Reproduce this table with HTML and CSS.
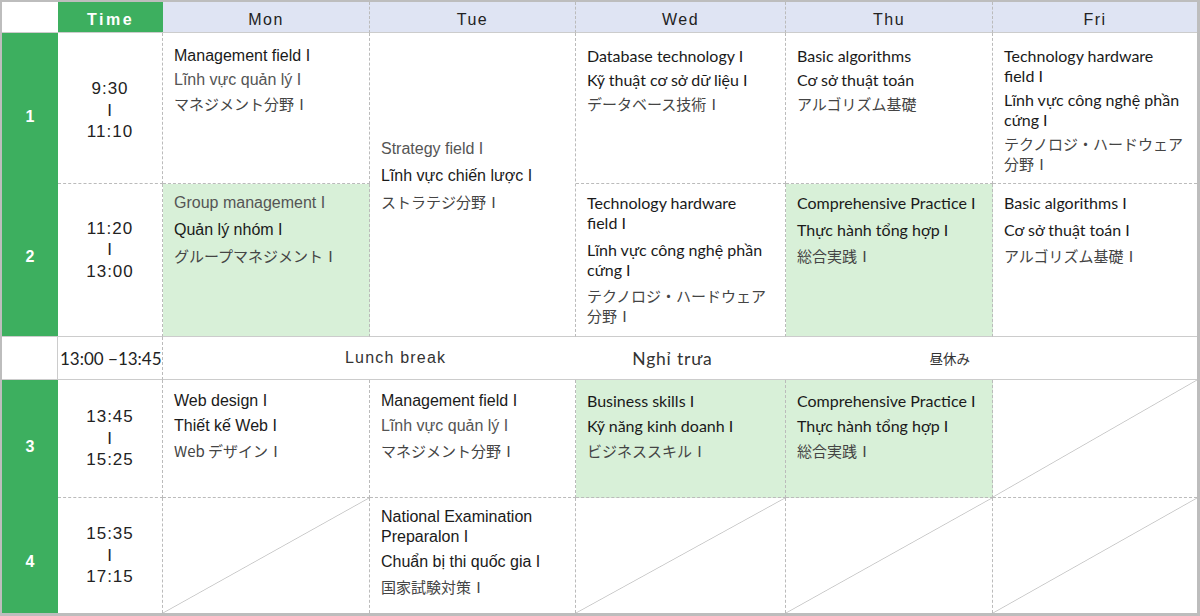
FILE: index.html
```html
<!DOCTYPE html>
<html lang="en">
<head>
<meta charset="utf-8">
<title>Timetable</title>
<link rel="stylesheet" href="styles.css">
</head>
<body>
<div class="timetable">
  <div class="cell corner"></div>
  <div class="cell head-time">Time</div>
  <div class="cell head-day">Mon</div>
  <div class="cell head-day">Tue</div>
  <div class="cell head-day">Wed</div>
  <div class="cell head-day">Thu</div>
  <div class="cell head-day last">Fri</div>

  <!-- Period 1 -->
  <div class="cell num n1">1</div>
  <div class="cell time t1"><span>9:30</span><span>I</span><span>11:10</span></div>
  <div class="cell subj r1 hv">
    <p class="en">Management field I</p>
    <p class="vi">Lĩnh vực quản lý I</p>
    <p class="ja">マネジメント分野Ⅰ</p>
  </div>
  <div class="cell subj span2 hv">
    <p class="vi">Strategy field I</p>
    <p class="en">Lĩnh vực chiến lược I</p>
    <p class="ja">ストラテジ分野Ⅰ</p>
  </div>
  <div class="cell subj r1 my">
    <p class="en">Database technology I</p>
    <p class="en">Kỹ thuật cơ sở dữ liệu I</p>
    <p class="ja">データベース技術Ⅰ</p>
  </div>
  <div class="cell subj r1 my">
    <p class="en">Basic algorithms</p>
    <p class="en">Cơ sở thuật toán</p>
    <p class="ja">アルゴリズム基礎</p>
  </div>
  <div class="cell subj r1 my last">
    <p class="en">Technology hardware field I</p>
    <p class="en">Lĩnh vực công nghệ phần cứng I</p>
    <p class="ja">テクノロジ・ハードウェア分野Ⅰ</p>
  </div>

  <!-- Period 2 -->
  <div class="cell num n2 row-end">2</div>
  <div class="cell time t2 row-end"><span>11:20</span><span>I</span><span>13:00</span></div>
  <div class="cell subj r2 hv green row-end">
    <p class="vi">Group management I</p>
    <p class="en">Quản lý nhóm I</p>
    <p class="ja">グループマネジメントⅠ</p>
  </div>
  <div class="cell subj r2 my narrow row-end">
    <p class="en">Technology hardware field I</p>
    <p class="en">Lĩnh vực công nghệ phần cứng I</p>
    <p class="ja">テクノロジ・ハードウェア分野Ⅰ</p>
  </div>
  <div class="cell subj r2 my green row-end">
    <p class="en">Comprehensive Practice I</p>
    <p class="en">Thực hành tổng hợp I</p>
    <p class="ja">総合実践Ⅰ</p>
  </div>
  <div class="cell subj r2 my last row-end">
    <p class="en">Basic algorithms I</p>
    <p class="en">Cơ sở thuật toán I</p>
    <p class="ja">アルゴリズム基礎Ⅰ</p>
  </div>

  <!-- Lunch -->
  <div class="cell lunch-num"></div>
  <div class="cell lunch-time">13:00 −13:45</div>
  <div class="cell lunch">
    <span class="lunch-en">Lunch break</span>
    <span class="lunch-vi">Nghỉ trưa</span>
    <span class="lunch-ja">昼休み</span>
  </div>

  <!-- Period 3 -->
  <div class="cell num n3">3</div>
  <div class="cell time"><span>13:45</span><span>I</span><span>15:25</span></div>
  <div class="cell subj r3 hv">
    <p class="en">Web design I</p>
    <p class="en">Thiết kế Web I</p>
    <p class="ja">Web デザインⅠ</p>
  </div>
  <div class="cell subj r3 hv">
    <p class="en">Management field I</p>
    <p class="vi">Lĩnh vực quản lý I</p>
    <p class="ja">マネジメント分野Ⅰ</p>
  </div>
  <div class="cell subj r3 my green">
    <p class="en">Business skills I</p>
    <p class="en">Kỹ năng kinh doanh I</p>
    <p class="ja">ビジネススキルⅠ</p>
  </div>
  <div class="cell subj r3 my green">
    <p class="en">Comprehensive Practice I</p>
    <p class="en">Thực hành tổng hợp I</p>
    <p class="ja">総合実践Ⅰ</p>
  </div>
  <div class="cell empty last"></div>

  <!-- Period 4 -->
  <div class="cell num n4 bottom">4</div>
  <div class="cell time bottom"><span>15:35</span><span>I</span><span>17:15</span></div>
  <div class="cell empty bottom"></div>
  <div class="cell subj r4 hv bottom">
    <p class="en">National Examination Preparalon I</p>
    <p class="en">Chuẩn bị thi quốc gia I</p>
    <p class="ja">国家試験対策Ⅰ</p>
  </div>
  <div class="cell empty bottom"></div>
  <div class="cell empty bottom"></div>
  <div class="cell empty bottom last"></div>
</div>
</body>
</html>
```

FILE: styles.css
```css
* { box-sizing: border-box; }

html, body {
  margin: 0;
  padding: 0;
  background: #ffffff;
}

.timetable {
  width: 1200px;
  height: 616px;
  border-style: solid;
  border-color: #bdbdbd;
  border-width: 2px 3px 3px 2px;
  display: grid;
  grid-template-columns: 56px 105px 207px 206px 210px 207px 204px;
  grid-template-rows: 31px 151px 153px 43px 118px 115px;
  font-family: "Liberation Sans", Arial, sans-serif;
  color: #222;
}

.cell {
  border-right: 1px dashed #bbbbbb;
  border-bottom: 1px dashed #bbbbbb;
}

.cell.last { border-right: none; }
.cell.row-end { border-bottom: 1px solid #cccccc; }
.cell.bottom { border-bottom: none; }

/* header */
.corner {
  background: #ffffff;
  border-right: none;
  border-bottom: 1px solid #cccccc;
}

.head-time {
  background: #3daf5f;
  color: #ffffff;
  font-weight: bold;
  font-size: 16px;
  letter-spacing: 2.5px;
  display: flex;
  align-items: center;
  justify-content: center;
  padding-top: 5px;
  border-right: none;
  border-bottom: 1px solid #cccccc;
}

.head-day {
  background: #dfe4f3;
  color: #222;
  font-size: 16px;
  letter-spacing: 1.5px;
  display: flex;
  align-items: center;
  justify-content: center;
  padding-top: 5px;
  border-bottom: 1px solid #cccccc;
}

/* period number */
.num {
  background: #3daf5f;
  color: #ffffff;
  font-weight: bold;
  font-size: 16px;
  display: flex;
  align-items: center;
  justify-content: center;
  border-right: none;
  border-bottom: none;
}

.num.row-end { border-bottom: 1px solid #cccccc; }
.num.n1 { padding-top: 17px; }
.num.n2 { padding-bottom: 7px; }
.num.n3 { padding-top: 16px; }
.num.n4 { padding-top: 13px; }

/* time column */
.time {
  display: flex;
  flex-direction: column;
  align-items: center;
  justify-content: center;
  font-size: 17px;
  letter-spacing: 1px;
  line-height: 21.5px;
  color: #222;
  padding-top: 0;
}

.time.t1 { padding-top: 4.5px; }
.time.t2 { padding-top: 0; padding-bottom: 20px; }

/* subject cells */
.subj {
  padding: 13px 12px 0 11px;
  display: flex;
  flex-direction: column;
}

.subj.narrow { padding-right: 18px; }

.subj p {
  margin: 0 0 4px 0;
  line-height: 20px;
}

.subj.r2 { padding-top: 9px; }
.subj.r2 p { margin-bottom: 6.5px; }
.subj.r3 { padding-top: 11px; }
.subj.r3 p { margin-bottom: 5px; }
.subj.r4 { padding-top: 9px; }
.subj.r4 p { margin-bottom: 5px; }

.subj.span2 {
  grid-row: span 2;
  justify-content: center;
  padding-top: 0;
  padding-bottom: 18px;
  border-bottom: 1px solid #cccccc;
}
.subj.span2 p { margin-bottom: 6.5px; }
.subj.span2 p:last-child { margin-bottom: 0; }

.hv { font-family: "Liberation Sans", Arial, sans-serif; font-size: 16px; }
.my { font-family: "Lato", "Open Sans", sans-serif; font-size: 16px; }

.subj .en { color: #1a1a1a; }
.subj .vi { color: #555555; }
.subj .ja {
  font-family: "Noto Sans CJK JP", sans-serif;
  font-size: 15px;
  color: #444444;
}

.green { background: #d8f0d8; }

/* empty slots with a diagonal */
.empty {
  background: linear-gradient(to bottom right,
    transparent calc(50% - 0.8px),
    #c8c8c8 50%,
    transparent calc(50% + 0.8px));
}

/* lunch row */
.lunch-num {
  border-right: 1px solid #cccccc;
  border-bottom: 1px solid #cccccc;
}

.lunch-time {
  font-family: "Lato", "Open Sans", sans-serif;
  font-size: 17px;
  color: #222;
  display: flex;
  align-items: center;
  padding-left: 2px;
  white-space: nowrap;
  border-bottom: 1px solid #cccccc;
}

.lunch {
  grid-column: span 5;
  display: flex;
  align-items: center;
  border-right: none;
  border-bottom: 1px solid #cccccc;
  padding-left: 182px;
}

.lunch-en {
  font-family: "Liberation Sans", Arial, sans-serif;
  font-size: 16px;
  letter-spacing: 1.2px;
  color: #333;
}

.lunch-vi {
  font-family: "Lato", "Open Sans", sans-serif;
  font-size: 17.5px;
  letter-spacing: 0.8px;
  color: #333;
  margin-left: 186px;
}

.lunch-ja {
  font-family: "Noto Sans CJK JP", sans-serif;
  font-size: 13.5px;
  color: #333;
  margin-left: 217px;
}
```
